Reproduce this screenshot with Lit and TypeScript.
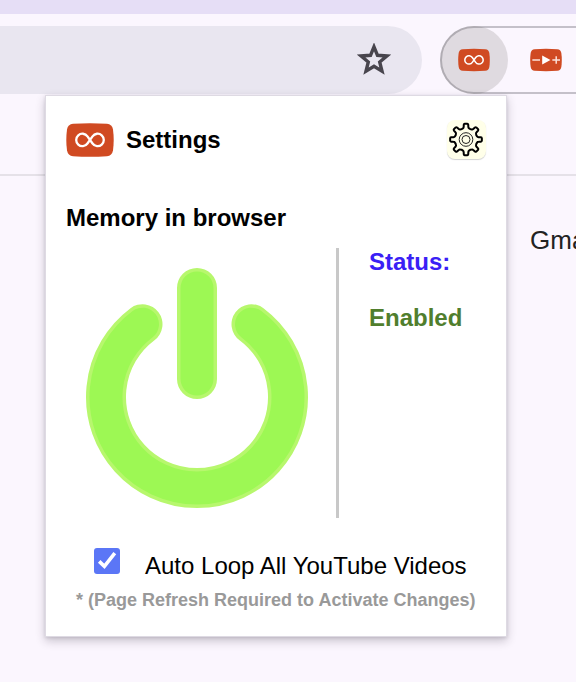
import { LitElement, html, css, svg } from "lit";
import { customElement, property, state } from "lit/decorators.js";

const gearPath = (() => {
  const point = (radius: number, degrees: number) => {
    const a = (degrees * Math.PI) / 180;
    return `${(radius * Math.sin(a)).toFixed(2)} ${(-radius * Math.cos(a)).toFixed(2)}`;
  };
  let d = `M${point(11.6, -15)}`;
  for (let i = 0; i < 8; i++) {
    const c = i * 45;
    d += `Q${point(11.8, c - 11.5)} ${point(12.8, c - 10.5)}`;
    d += `L${point(15, c - 8.5)}Q${point(15.9, c - 7.5)} ${point(15.9, c - 4.5)}`;
    d += `L${point(15.9, c + 4.5)}Q${point(15.9, c + 7.5)} ${point(15, c + 8.5)}`;
    d += `L${point(12.8, c + 10.5)}Q${point(11.8, c + 11.5)} ${point(11.6, c + 15)}`;
    d += `Q${point(10.9, c + 22.5)} ${point(11.6, c + 30)}`;
  }
  return d + "Z";
})();

@customElement("loop-logo")
class LoopLogo extends LitElement {
  @property() kind = "loop";
  static styles = css`
    :host { display: block; flex: none; }
    svg { display: block; width: 100%; height: 100%; }
  `;
  render() {
    return html`<svg viewBox="0 0 48 34">
      <path d="M7 .8Q24 -.2 41 .8Q46 1.2 47 6.5Q48.4 17 47 27.5Q46 32.8 41 33.2Q24 34.2 7 33.2Q2 32.8 1 27.5Q-.4 17 1 6.5Q2 1.2 7 .8Z" fill="#d04a22" />
      ${this.kind === "loop"
        ? svg`<path d="M26.55 13.3A6.2 6.2 0 1 1 26.55 20.5L21.45 13.3A6.2 6.2 0 1 0 21.45 20.5Z" fill="none" stroke="#fff" stroke-width="2.3" stroke-linejoin="round" />`
        : svg`<path d="M3.5 17H15M33.5 17H45M39.3 11.3V22.7" fill="none" stroke="#fbe3dc" stroke-width="2.2" /><path d="M18.3 10.3L30.7 17L18.3 23.7Z" fill="#fff" />`}
    </svg>`;
  }
}

@customElement("settings-popup")
class SettingsPopup extends LitElement {
  @state() autoLoop = true;
  static styles = css`
    :host {
      display: block; box-sizing: border-box; width: 462px; height: 542px;
      padding: 24px 20px 0; border: 1px solid #dedae3; background: #fff; color: #000;
      box-shadow: 0 4px 9px rgba(40, 32, 50, 0.24), 0 1px 3px rgba(40, 32, 50, 0.12);
      font: 24px/28px "Liberation Sans", Arial, sans-serif;
    }
    header { display: flex; align-items: center; height: 40px; }
    .logo { width: 48px; height: 34px; }
    h1, h2 { margin: 0; font-size: 24px; line-height: 28px; font-weight: 700; }
    h1 { margin-left: 12px; flex: 1; }
    .gear {
      width: 39px; height: 39px; padding: 0; border: 0; border-radius: 8px; margin-bottom: 1px;
      background: #ffffe9; box-shadow: 0 1px 1px rgba(0, 0, 0, 0.18);
    }
    .gear svg { display: block; width: 39px; height: 39px; }
    h2 { margin-top: 44px; }
    .memory { display: flex; height: 270px; margin-top: 16px; }
    .power { display: block; width: 270px; height: 270px; flex: none; }
    .status {
      box-sizing: border-box; height: 270px; flex: 1; padding-left: 30px;
      border-left: 3px solid #c8c8c8; font-weight: 700;
    }
    .label { color: #3a20f5; }
    .value { color: #507e2d; margin-top: 28px; }
    .option { display: flex; align-items: flex-start; height: 34px; margin: 30px 0 0 28px; }
    .box {
      display: flex; width: 26px; height: 26px; border-radius: 3px; background: #5b76f6;
      margin-right: 25px;
    }
    .text { margin-top: 4px; white-space: nowrap; }
    .note {
      margin: 8px 0 0 10px; color: #999; font-size: 18px; line-height: 20px;
      font-weight: 700; white-space: nowrap;
    }
  `;
  render() {
    return html`
      <header>
        <loop-logo class="logo"></loop-logo>
        <h1>Settings</h1>
        <button class="gear" aria-label="Settings">
          <svg viewBox="-19 -19.5 39 39" fill="none" stroke="#000">
            <path d=${gearPath} stroke-width="2" stroke-linejoin="round" />
            <circle r="6.8" stroke-width="1" stroke="#222" />
            <circle r="4" stroke-width="1" stroke="#222" />
          </svg>
        </button>
      </header>
      <h2>Memory in browser</h2>
      <section class="memory">
        <svg class="power" viewBox="66 248 270 270" fill="none" stroke-linecap="round">
          <path d="M142.5 324.2A91 91 0 1 0 251.5 324.2M197 288V379" stroke="#b7f76d" stroke-width="40" />
          <path d="M142.5 324.2A91 91 0 1 0 251.5 324.2M197 288V379" stroke="#9df854" stroke-width="33" />
        </svg>
        <div class="status">
          <div class="label">Status:</div>
          <div class="value">Enabled</div>
        </div>
      </section>
      <div class="option" @click=${() => (this.autoLoop = !this.autoLoop)}>
        <span class="box" role="checkbox" aria-checked=${this.autoLoop}>
          <svg width="26" height="26" viewBox="0 0 26 26">
            ${this.autoLoop ? svg`<path d="M5.2 13.4L10.4 18.4L20.8 5.2" fill="none" stroke="#fff" stroke-width="3.6" />` : ""}
          </svg>
        </span>
        <span class="text">Auto Loop All YouTube Videos</span>
      </div>
      <div class="note">* (Page Refresh Required to Activate Changes)</div>
    `;
  }
}

@customElement("app-root")
class AppRoot extends LitElement {
  static styles = css`
    :host {
      display: block; position: relative; width: 576px; height: 682px; overflow: hidden;
      background: #fbf6fe; font-family: "Liberation Sans", Arial, sans-serif;
    }
    .tabs { height: 14px; background: #e6def6; }
    .toolbar { display: flex; box-sizing: border-box; height: 80px; padding-top: 12px; gap: 18px; }
    .address {
      display: flex; align-items: center; justify-content: flex-end; box-sizing: border-box;
      width: 422px; flex: none; height: 68px; padding-right: 31px;
      background: #e9e6f0; border-radius: 0 34px 34px 0;
    }
    .extensions {
      display: flex; align-items: center; box-sizing: border-box; width: 180px; height: 68px;
      flex: none; border: 2px solid #c4c0c9; border-radius: 34px 0 0 34px;
    }
    .active {
      display: flex; align-items: center; justify-content: center; box-sizing: border-box;
      width: 68px; height: 68px; margin-left: -2px; flex: none; border-radius: 50%;
      background: rgba(64, 59, 54, 0.15);
    }
    .icon { width: 32px; height: 24px; }
    .second { margin-left: 22px; }
    .bookmarks { box-sizing: border-box; height: 82px; border-bottom: 2px solid #e5e1e8; }
    .page { display: flex; justify-content: flex-end; height: 506px; }
    .link { width: 46px; margin-top: 49px; font-size: 26px; line-height: 30px; color: #222; white-space: nowrap; overflow: hidden; }
    .popup { position: absolute; left: 45px; top: 95px; }
  `;
  render() {
    return html`
      <div class="tabs"></div>
      <div class="toolbar">
        <div class="address">
          <svg width="34" height="34" viewBox="0 0 34 34" fill="none">
            <path d="M17 3.8L20.5 12.3L29.8 13L22.7 19L25 28.2L17 23.3L9 28.2L11.3 19L4.2 13L13.5 12.3Z" stroke="#48454d" stroke-width="3.4" />
          </svg>
        </div>
        <div class="extensions">
          <div class="active"><loop-logo class="icon"></loop-logo></div>
          <loop-logo class="icon second" kind="speed"></loop-logo>
        </div>
      </div>
      <div class="bookmarks"></div>
      <div class="page"><span class="link">Gmail</span></div>
      <settings-popup class="popup"></settings-popup>
    `;
  }
}
